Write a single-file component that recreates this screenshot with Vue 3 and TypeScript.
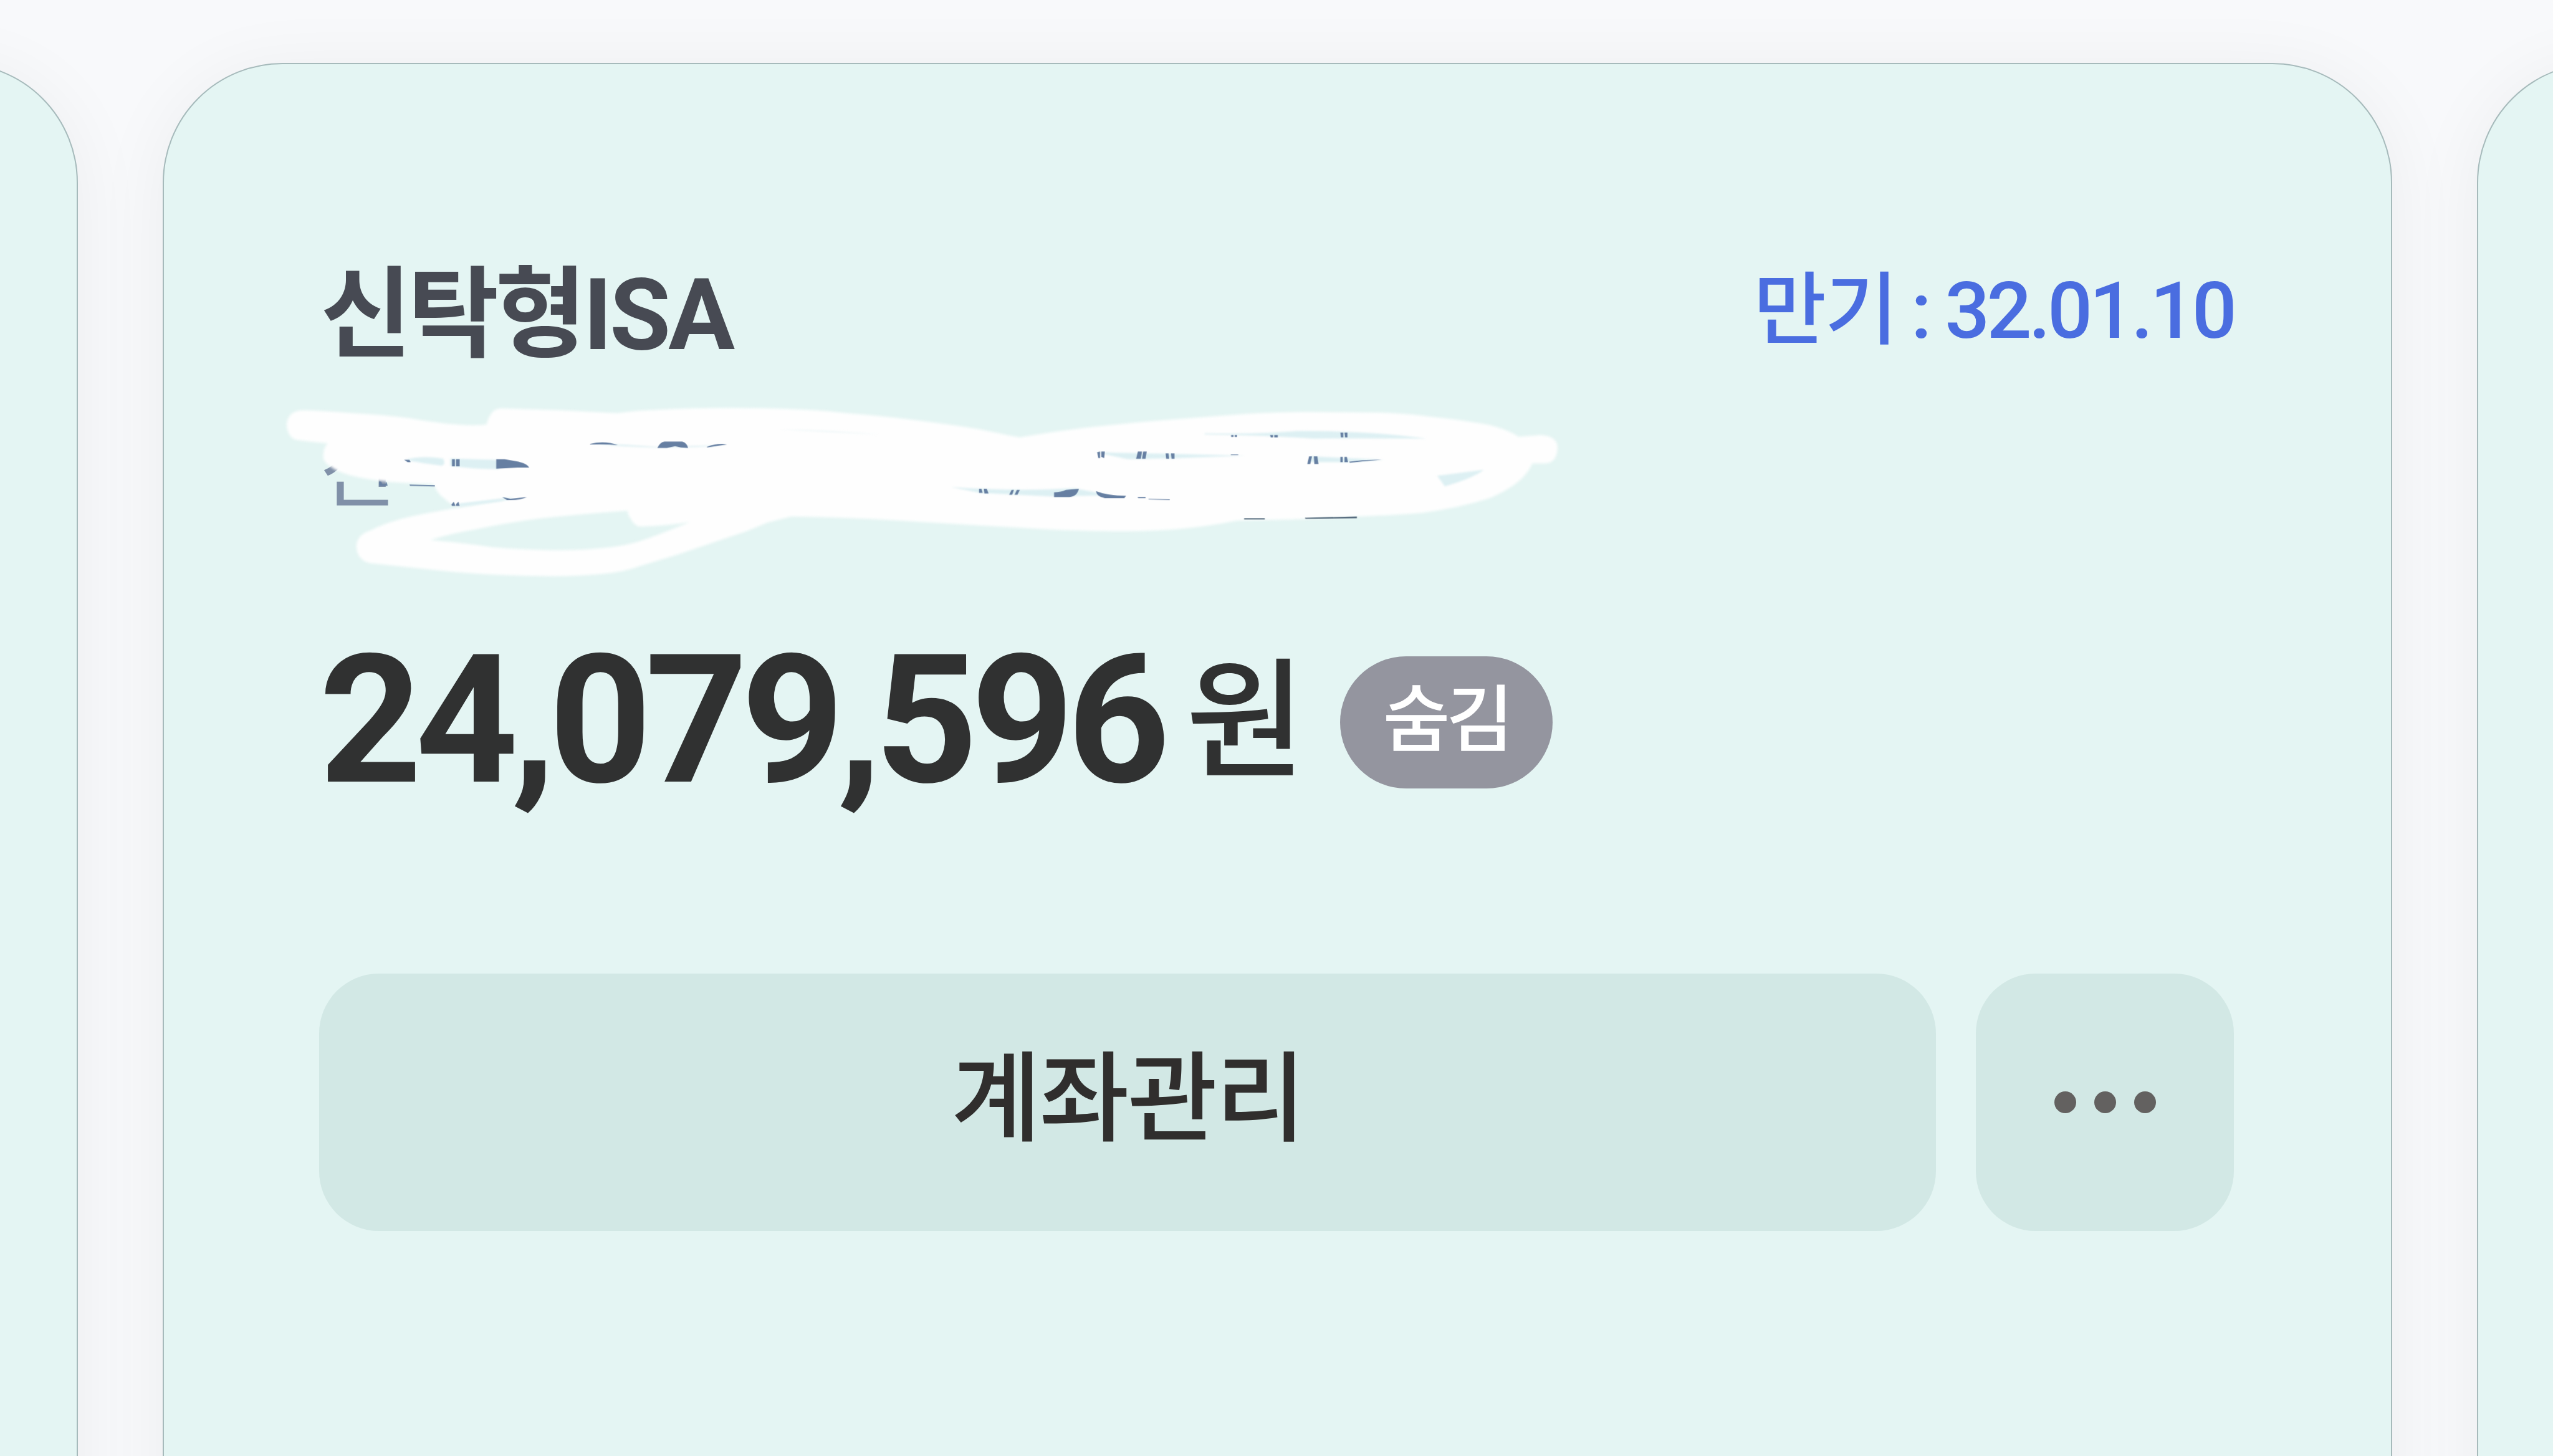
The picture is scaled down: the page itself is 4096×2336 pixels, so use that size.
<script setup lang="ts">
interface Account {
  name: string
  ownerInitial: string
  maturity: string
  balance: string
  unit: string
}

const account: Account = {
  name: '신탁형ISA',
  ownerInitial: '신',
  maturity: '만기 : 32.01.10',
  balance: '24,079,596',
  unit: '원',
}

const nameHangul = account.name.replace(/[A-Z]+$/, '')
const nameLatin = account.name.slice(nameHangul.length)
const [dueLabel, dueColon, dueDate] = account.maturity.split(' ')
</script>

<template>
  <main class="screen">
    <div class="card side"></div>
    <section class="card main">
      <header class="head">
        <h1 class="name"><span>{{ nameHangul }}</span><span class="latin">{{ nameLatin }}</span></h1>
        <p class="due"><span class="due-label">{{ dueLabel }}</span><span class="colon">{{ dueColon }}</span><span>{{ dueDate }}</span></p>
      </header>

      <div class="number">
        <span class="owner">{{ account.ownerInitial }}</span>
        <svg class="scribble" viewBox="460 660 2220 340">
          <path class="white" fill-rule="evenodd" d="M514 694 Q555 695 598 699 Q650 702 690 707 Q745 717 787 719 Q808 720 824 718 Q825 710 830 702 Q837 690 850 691 L948 694 L1045 699 Q1070 695 1109 693.5 Q1170 690 1235 690 Q1300 690 1360 693 Q1400 695 1434 699 Q1500 704 1568 713 Q1615 719 1657 726 Q1700 735 1727 740 Q1780 731 1836 724 Q1905 716 1970 711 Q2020 707 2086 702 Q2150 697 2211 697 L2336 698 Q2376 699 2416 704 Q2480 711 2523 719 Q2557 728 2572 739 L2608 736 Q2637 737 2638 757 Q2637 783 2618 784 L2595 784 Q2590 797 2577 810 Q2558 828 2523 843 Q2470 860 2407 868 Q2360 872 2300 874 Q2250 877 2184 879 L2095 881 Q2040 892 1987 896 Q1940 899 1889 899 Q1800 898 1729 893 Q1620 887 1523 881 Q1430 875 1340 874 L1300 884 L1264 899 L1149 938 L1080 959 Q1055 968 1022 971 Q970 976 919 975 Q840 974 770 968 Q700 961 626 953 Q604 948 603 924 Q604 905 626 898 Q655 883 695 874 Q730 867 764 861 Q820 853 873 842 L778 855 Q763 856 753 844 Q740 835 737 825 L733 819 Q690 818 655 815 Q620 811 592 804 Q570 798 560 790 Q546 782 547 771 Q547 757 555 750 Q527 748 500 744 Q486 738 485 718 Q487 694 514 694Z
            M728 914 Q762 903 804 896 Q850 886 908 878 Q980 870 1063 864 Q1062 871 1068 878 Q1074 890 1083 891 Q1130 890 1169 883 Q1130 899 1103 909 Q1070 922 1034 926 Q980 932 931 931 Q880 930 833 926 Q780 918 728 914Z" />
          <g class="gap">
            <path d="M684 778 Q715 770 750 776 Q755 785 748 788 Q715 784 684 778Z" />
            <path d="M762 776 L840 778 L845 794 Q800 794 762 788Z" />
            <path d="M1000 750 Q1060 752 1112 756 L1230 753 Q1180 758 1110 757 Q1050 756 1000 750Z" />
            <path d="M1316 726 Q1390 727 1490 735 Q1400 731 1316 726Z" opacity=".6" />
            <path d="M2040 733 Q2130 735 2200 729 Q2320 729 2416 742 Q2280 741 2226 742 Q2150 737 2040 735Z" />
            <path d="M1855 765 L1990 768 L2110 771 L1995 775 L1910 777Z" />
            <path d="M2220 772 L2285 775 L2345 778 L2280 782 L2220 782Z" />
            <path d="M1610 824 Q1720 832 1820 826 L1880 838 L1780 840 L1660 834Z" />
            <path d="M2434 805 L2513 795 Q2495 809 2447 823Z" />
            <path d="M778 852 L870 841 L850 848 L778 857Z" />
          </g>
          <g class="ink">
            <path d="M684 778h9l2 4h-5zM765 777h5v12h-5zM772 777h6v12h-6zM840 777h14l24 4q15 4 18 10h-20l-36 2zM641 815l4 0 2 4h5l2-4 2 7h-14zM693 820l43 1v2l-42-1zM764 854l4-5 3 7h-6zM772 853l4-4 2 7h-6zM850 841l14 3 28-3q-12 6-34 5zM999 751q25-6 47 2-22-2-47-1zM1113 758q4-10 12-11h30q8 2 10 11l-12-1-10-2-14 3zM1197 756q18-7 34-4-16 2-34 5z" />
            <path d="M1858 765l5-1v11h-3zM1865 764h6l-1 11-5-2zM1927 764h7l-2 12h-8zM1936 764h6l-2 12h-6zM1974 767h5l1 9h-5zM1983 767h6v9h-5zM2085 736h4v3h-4zM2091 736h4v3h-4zM2151 736h5v4h-4zM2158 736h6v4h-6zM2270 732h5v8h-4zM2277 732h5v8h-4zM2084 769h12l2 1h-13zM2217 772h5l-3 13h-5zM2225 772h6l2 13h-7zM2270 773h4v9h-4zM2277 773h4l2 9h-6zM2285 781q27-4 55-3-28 2-54 5z" />
            <path d="M1658 827h4l2 7h-6zM1666 827h5l3 8h-7zM1713 829h4l-3 8h-5zM1722 829h5l-4 8h-5zM1785 833q12 0 20-4l22-2q-3 13-16 14h-26zM1856 831q20 8 51 8l-3 4h-33q-14-3-15-12zM1926 841h14v2h-12zM1945 844l36 1v1l-36-1z" />
          </g>
          <path class="line" d="M2107 877h35v2h-35zM2210 876l88-2v3l-87 1z" />
        </svg>
      </div>

      <div class="amount">
        <strong class="value">{{ account.balance }}</strong>
        <span class="unit">{{ account.unit }}</span>
        <button class="hide">숨김</button>
      </div>

      <div class="actions">
        <button class="manage">계좌관리</button>
        <button class="more"><i></i><i></i><i></i></button>
      </div>
    </section>
    <div class="card side"></div>
  </main>
</template>

<style>
body {
  margin: 0;
  overflow: hidden;
}
</style>

<style scoped>
.screen {
  box-sizing: border-box;
  width: 4096px;
  height: 2336px;
  padding-top: 101px;
  display: flex;
  gap: 136px;
  overflow: hidden;
  background: #f8f9fb;
  font-family: Roboto, 'Noto Sans CJK KR', sans-serif;
}
.card {
  box-sizing: border-box;
  flex: none;
  height: 2600px;
  border: 2px solid #a6babb;
  border-radius: 192px;
  background: #e4f5f3;
  box-shadow: 0 14px 120px rgba(30, 20, 20, 0.055);
}
.side {
  width: 1000px;
}
.side:first-child {
  margin-left: -875px;
}
.main {
  width: 3577px;
  padding: 303px 252px 0 249px;
}
h1,
p {
  margin: 0;
  font-weight: inherit;
}
button {
  border: 0;
  padding: 0;
  font-family: inherit;
}
.head {
  display: flex;
  justify-content: space-between;
  height: 200px;
  line-height: 200px;
  white-space: nowrap;
}
.name {
  padding-left: 2px;
  font-size: 159px;
  font-weight: 700;
  letter-spacing: -6px;
  color: #474a53;
}
.latin {
  margin-left: 1px;
  letter-spacing: -4px;
}
.due {
  display: flex;
  height: 200px;
  line-height: 186px;
  font-size: 127px;
  font-weight: 500;
  letter-spacing: -5px;
  color: #4a6de0;
}
.due-label {
  letter-spacing: -2px;
}
.colon {
  margin: 0 26px 0 23px;
}
.number {
  position: relative;
  box-sizing: border-box;
  height: 400px;
  padding: 71px 0 0 0;
}
.owner {
  display: block;
  font-size: 135px;
  line-height: 160px;
  color: #8090a8;
}
.scribble {
  position: absolute;
  left: -77px;
  top: 20px;
  width: 2105px;
  height: 322px;
}
.white {
  fill: #fefefe;
  filter: blur(2px);
}
.gap {
  fill: #ddf0f3;
  filter: blur(1.5px);
}
.ink {
  fill: #667fa2;
}
.line {
  fill: #52677a;
}
.amount {
  display: flex;
  height: 300px;
  line-height: 300px;
  color: #303131;
  white-space: nowrap;
}
.value {
  font-size: 287.6px;
  font-weight: 700;
  letter-spacing: -10.7px;
}
.unit {
  margin-left: 36px;
  font-size: 208px;
  font-weight: 500;
  line-height: 306px;
}
.hide {
  width: 341px;
  height: 212px;
  margin: 47px 0 0 56px;
  padding-bottom: 6px;
  border-radius: 106px;
  background: #94959f;
  color: #fff;
  font-size: 117px;
  font-weight: 500;
  letter-spacing: -6px;
  line-height: 180px;
}
.actions {
  display: flex;
  gap: 64px;
  margin-top: 256px;
  height: 413px;
}
.manage,
.more {
  border-radius: 96px;
  background: #d2e8e5;
}
.manage {
  flex: 1;
  padding-bottom: 9px;
  color: #302e2d;
  font-size: 157px;
  font-weight: 500;
  letter-spacing: -3px;
  line-height: 300px;
}
.more {
  width: 414px;
  display: flex;
  align-items: center;
  justify-content: center;
  gap: 29px;
}
.more i {
  width: 35px;
  height: 35px;
  border-radius: 50%;
  background: #636160;
}
</style>
